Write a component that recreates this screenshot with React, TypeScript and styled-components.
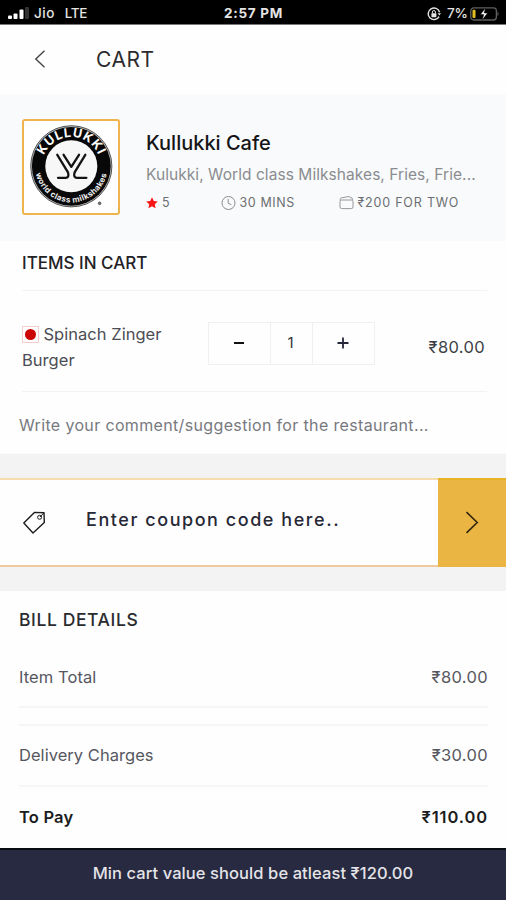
import React from 'react';
import styled, { createGlobalStyle } from 'styled-components';

const GlobalStyle = createGlobalStyle`
  * { box-sizing: border-box; }
  body { margin: 0; background: #fff; }
`;

const Screen = styled.main`
  width: 506px;
  height: 900px;
  display: flex;
  flex-direction: column;
  overflow: hidden;
  background: #fefefe;
  color: #3a3b42;
  font-family: Inter, 'Liberation Sans', sans-serif;
  white-space: nowrap;

  svg { display: block; flex: none; }
`;

const StatusBar = styled.header`
  height: 25px;
  padding: 3px 6px 0 7px;
  display: grid;
  grid-template-columns: 1fr auto 1fr;
  align-items: center;
  background: #000;
  border-bottom: 1px solid #777;
  color: #e4e4e4;
  font-size: 13.5px;
  font-weight: 500;
  line-height: 21px;
`;

const StatusGroup = styled.div<{ $end?: boolean }>`
  display: flex;
  align-items: center;
  justify-content: ${p => (p.$end ? 'flex-end' : 'flex-start')};
`;

const Carrier = styled.span`
  margin: 0 10px 0 4px;
  letter-spacing: 0.5px;
`;

const Network = styled.span`
  letter-spacing: -0.4px;
`;

const Clock = styled.span`
  font-weight: 700;
  letter-spacing: 0.7px;
`;

const Percent = styled.span`
  margin: 0 2px 0 6px;
`;

const TitleBar = styled.div`
  height: 69px;
  display: flex;
  align-items: center;
  padding: 0 0 2px 34px;
`;

const PageTitle = styled.h1`
  margin: 1px 0 0 50px;
  font-size: 21px;
  font-weight: 400;
  letter-spacing: 0.5px;
  color: #2c2c2e;
`;

const Restaurant = styled.section`
  height: 147px;
  padding: 25px 22px 0;
  display: flex;
  gap: 26px;
  background: #f8fafc;
`;

const LogoFrame = styled.div`
  width: 98px;
  height: 96px;
  border: 2px solid #f0b44e;
  border-radius: 3px;
  background: #fff;
`;

const RestaurantInfo = styled.div`
  width: 334px;
  padding-top: 10px;
`;

const RestaurantName = styled.h2`
  margin: 0 0 7px;
  font-size: 20px;
  font-weight: 500;
  line-height: 28px;
  color: #151517;
`;

const Cuisine = styled.p`
  margin: 0;
  font-size: 15.5px;
  line-height: 22px;
  letter-spacing: 0.06px;
  color: #8b8c8f;
`;

const MetaRow = styled.div`
  margin-top: 7px;
  display: flex;
  font-size: 12.5px;
  line-height: 20px;
  color: #6c6e71;
`;

const Meta = styled.div<{ $width: number; $gap: number; $spacing: number }>`
  width: ${p => p.$width}px;
  display: flex;
  align-items: center;
  gap: ${p => p.$gap}px;
  letter-spacing: ${p => p.$spacing}px;
`;

const CartItems = styled.section`
  height: 213px;
  padding: 0 18px 0 22px;
  border-bottom: 1px solid #f9f9f9;
`;

const ItemsTitle = styled.h3`
  height: 49px;
  margin: 0;
  font-size: 17px;
  font-weight: 500;
  line-height: 45px;
  color: #222226;
`;

const ItemRow = styled.div`
  height: 102px;
  margin-right: 1px;
  display: flex;
  border-top: 1px solid #f3f3f4;
  border-bottom: 1px solid #f3f3f4;
`;

const ItemName = styled.div`
  width: 186px;
  padding-top: 30px;
  font-size: 16.5px;
  line-height: 26px;
  letter-spacing: 0.03px;
  color: #4c4d54;
`;

const ItemLine = styled.div`
  display: flex;
  align-items: center;
`;

const NonVegMark = styled.span`
  width: 17px;
  height: 17px;
  margin-right: 4.5px;
  display: grid;
  place-items: center;
  border: 1px solid #f5cccc;

  &::before {
    content: '';
    width: 11px;
    height: 11px;
    border-radius: 50%;
    background: #cc0303;
  }
`;

const Stepper = styled.div`
  width: 167px;
  height: 43px;
  margin-top: 31px;
  display: grid;
  grid-template-columns: 61px 43px 1fr;
  border: 1px solid #f0f0f1;
`;

const StepperCell = styled.div<{ $middle?: boolean }>`
  display: grid;
  place-items: center;
  padding: 0 2px 2px 0;
  border: solid #f0f0f1;
  border-width: ${p => (p.$middle ? '0 1px' : '0')};
  font-size: 15px;
  color: #333;
`;

const ItemPrice = styled.div`
  flex: 1;
  padding: 43px 2px 0 0;
  text-align: right;
  font-size: 16.5px;
  line-height: 26px;
  letter-spacing: 0.35px;
  color: #3d3e45;
`;

const Comment = styled.div`
  margin-left: -3px;
  font-size: 16px;
  line-height: 66px;
  letter-spacing: 0.35px;
  color: #77797f;
`;

const Gap = styled.div`
  height: 24px;
  background: #f3f3f3;
`;

const Coupon = styled.section`
  height: 89px;
  display: flex;
`;

const CouponField = styled.div`
  width: 438px;
  padding-left: 22px;
  display: flex;
  align-items: center;
  border-top: 2px solid #f4dcae;
  border-bottom: 2px solid #edcb9c;
`;

const CouponText = styled.span`
  margin: -6px 0 0 40px;
  font-size: 18px;
  font-weight: 500;
  letter-spacing: 1.55px;
  color: #272836;
`;

const CouponSubmit = styled.div`
  flex: 1;
  display: grid;
  place-items: center;
  padding-bottom: 3px;
  border-top: 2px solid #e5b324;
  background: #eab543;
`;

const Bill = styled.section`
  height: 257px;
  padding: 0 18px 0 19px;
`;

const BillTitle = styled.h3`
  height: 57px;
  margin: 0;
  font-size: 17.5px;
  font-weight: 500;
  line-height: 58px;
  letter-spacing: 0.6px;
  color: #2a2b2e;
`;

const BillRow = styled.div<{ $height: number; $total?: boolean }>`
  height: ${p => p.$height}px;
  padding-bottom: 1px;
  display: flex;
  align-items: center;
  justify-content: space-between;
  border-bottom: ${p => (p.$total ? 'none' : '2px solid #f6f6f7')};
  font-size: 16.5px;
  font-weight: ${p => (p.$total ? 600 : 400)};
  color: ${p => (p.$total ? '#1b1c20' : '#56575e')};
`;

const BillLabel = styled.span<{ $spacing: number }>`
  letter-spacing: ${p => p.$spacing}px;
`;

const BillAmount = styled.span<{ $spacing: number }>`
  letter-spacing: ${p => p.$spacing}px;
`;

const BillSpacer = styled.div`
  height: 18px;
  border-bottom: 2px solid #f6f6f7;
`;

const Notice = styled.footer`
  height: 52px;
  border-top: 2px solid #080d12;
  background: #272a40;
  color: #e4e4e8;
  text-align: center;
  font-size: 16.5px;
  font-weight: 500;
  line-height: 47px;
  letter-spacing: 0.08px;
`;

const SignalIcon = () => (
  <svg width="23" height="14" viewBox="0 0 23 14">
    <rect x="1" y="8.5" width="4" height="3.5" rx="1" fill="#fff" />
    <rect x="6.5" y="6.5" width="4" height="5.5" rx="1" fill="#fff" />
    <rect x="12.5" y="2.5" width="4" height="9.5" rx="1" fill="#fff" />
    <rect x="18" y="0" width="4" height="12" rx="1" fill="#333" />
  </svg>
);

const RotationLockIcon = () => (
  <svg width="14" height="14" viewBox="0 0 14 14" fill="none" stroke="#e4e4e4">
    <path d="M12.1 9.6A5.8 5.8 0 1 1 12.6 5.2" strokeWidth="1.4" />
    <path d="M10.6 6.2h3.4l-1.7 2.4z" fill="#e4e4e4" stroke="none" />
    <rect x="4.4" y="6.2" width="5" height="4" rx=".6" fill="#e4e4e4" stroke="none" />
    <path d="M5.4 6.4V5a1.5 1.5 0 0 1 3 0v1.4" />
  </svg>
);

const BatteryIcon = () => (
  <svg width="30" height="14" viewBox="0 0 30 14">
    <rect x=".8" y=".8" width="25.6" height="12.2" rx="3" fill="none" stroke="#606060" strokeWidth="1.3" />
    <rect x="2.5" y="2.7" width="3" height="8.4" rx="1" fill="#dfbd25" />
    <path d="M27.5 4.5q2.4 2.4 0 4.8z" fill="#606060" />
    <path d="M15.5 1 10.4 7.5h3.3L12.2 13l5.4-7h-3.4z" fill="#fff" stroke="#000" strokeWidth=".5" />
  </svg>
);

const BackIcon = () => (
  <svg width="12" height="18" viewBox="0 0 12 18" fill="none" stroke="#444" strokeWidth="1.4">
    <path d="M10.5 .8 1.8 9l8.7 8.2" />
  </svg>
);

const StarIcon = () => (
  <svg width="12" height="12" viewBox="0 0 24 24" fill="#f81414">
    <path d="m12 .5 3.5 7.4 8.1 1-6 5.6 1.6 8.1L12 18.6l-7.2 4 1.6-8.1-6-5.6 8.1-1z" />
  </svg>
);

const ClockIcon = () => (
  <svg width="15" height="15" viewBox="0 0 15 15" fill="none" stroke="#8a8c8f" strokeWidth="1">
    <circle cx="7.5" cy="7" r="6.5" />
    <path d="M7.2 2.9v4.4l3.2 1.4" />
  </svg>
);

const WalletIcon = () => (
  <svg width="15" height="14" viewBox="0 0 15 14" fill="none" stroke="#96989b" strokeWidth="1">
    <rect x="1" y="4" width="13" height="8.6" rx="1.6" />
    <path d="M1.2 4.7V3.3q0-1.2 1.2-1.4L9.8.5q1.2 0 1.4 1.2h1q1.2 0 1.2 1.4v1.4" />
  </svg>
);

const TagIcon = () => (
  <svg width="24" height="24" viewBox="0 0 24 24" fill="none" stroke="#1c1c1c" strokeWidth="1.4" strokeLinejoin="round">
    <path d="M12.4 1.4 22 1.8l.3 9.8L11 22 1.8 12z" />
    <circle cx="17.6" cy="6.3" r="2" strokeWidth="1" />
    <path d="m17.8 6.1 4.2-4.3" strokeWidth="1" />
  </svg>
);

const ForwardIcon = () => (
  <svg width="14" height="23" viewBox="0 0 14 23" fill="none" stroke="#33280f" strokeWidth="1.6">
    <path d="M1.5 1.2 12.2 11.5 1.5 21.8" />
  </svg>
);

const MinusIcon = () => (
  <svg width="12" height="12" viewBox="0 0 12 12" stroke="#111" strokeWidth="2">
    <path d="M1 6h10" />
  </svg>
);

const PlusIcon = () => (
  <svg width="12" height="12" viewBox="0 0 12 12" stroke="#26263a" strokeWidth="1.8">
    <path d="M.5 6h11M6 .5v11" />
  </svg>
);

const CafeLogo = () => (
  <svg width="94" height="92" viewBox="1.2 .7 94 92" fontFamily="Inter, sans-serif">
    <defs>
      <path id="ringTop" d="M19.1 46A29.4 29.4 0 0 1 77.9 46" />
      <path id="ringBottom" d="M12.3 46A36.2 36.2 0 0 0 84.7 46" />
    </defs>
    <circle cx="48.5" cy="46" r="40.6" fill="#bbb" stroke="#444" strokeWidth=".9" />
    <circle cx="48.5" cy="46" r="39.4" fill="#080808" />
    <circle cx="48.5" cy="46" r="26" fill="#f7f7f7" />
    <text fill="#fff" fontSize="12.5" fontWeight="700" textAnchor="middle" letterSpacing=".9">
      <textPath href="#ringTop" startOffset="50%">KULLUKKI</textPath>
    </text>
    <text fill="#eee" fontSize="8" fontWeight="700" textAnchor="middle" letterSpacing=".35">
      <textPath href="#ringBottom" startOffset="50%">world class milkshakes</textPath>
    </text>
    <g fill="none" stroke="#141414" strokeWidth="2.3" strokeLinecap="round" strokeLinejoin="round">
      <path d="M34.5 34.5 45.2 52q1.4 5.5-2.4 5.5h-7.6" />
      <path d="M40.8 34.5 48.5 46.5 56.2 34.5" />
      <path d="M62.5 34.5 51.8 52q-1.4 5.5 2.4 5.5h9.4" />
    </g>
    <circle cx="76.8" cy="83" r="1.3" fill="#777" stroke="#555" strokeWidth="1" />
  </svg>
);

export default function App() {
  return (
    <Screen>
      <GlobalStyle />
      <StatusBar>
        <StatusGroup>
          <SignalIcon />
          <Carrier>Jio</Carrier>
          <Network>LTE</Network>
        </StatusGroup>
        <Clock>2:57 PM</Clock>
        <StatusGroup $end>
          <RotationLockIcon />
          <Percent>7%</Percent>
          <BatteryIcon />
        </StatusGroup>
      </StatusBar>

      <TitleBar>
        <BackIcon />
        <PageTitle>CART</PageTitle>
      </TitleBar>

      <Restaurant>
        <LogoFrame>
          <CafeLogo />
        </LogoFrame>
        <RestaurantInfo>
          <RestaurantName>Kullukki Cafe</RestaurantName>
          <Cuisine>Kulukki, World class Milkshakes, Fries, Frie...</Cuisine>
          <MetaRow>
            <Meta $width={75} $gap={4} $spacing={0}>
              <StarIcon />5
            </Meta>
            <Meta $width={118} $gap={3.5} $spacing={0.6}>
              <ClockIcon />30 MINS
            </Meta>
            <Meta $width={130} $gap={3.5} $spacing={0.8}>
              <WalletIcon />₹200 FOR TWO
            </Meta>
          </MetaRow>
        </RestaurantInfo>
      </Restaurant>

      <CartItems>
        <ItemsTitle>ITEMS IN CART</ItemsTitle>
        <ItemRow>
          <ItemName>
            <ItemLine>
              <NonVegMark />
              Spinach Zinger
            </ItemLine>
            <ItemLine>Burger</ItemLine>
          </ItemName>
          <Stepper>
            <StepperCell>
              <MinusIcon />
            </StepperCell>
            <StepperCell $middle>1</StepperCell>
            <StepperCell>
              <PlusIcon />
            </StepperCell>
          </Stepper>
          <ItemPrice>₹80.00</ItemPrice>
        </ItemRow>
        <Comment>Write your comment/suggestion for the restaurant...</Comment>
      </CartItems>

      <Gap />
      <Coupon>
        <CouponField>
          <TagIcon />
          <CouponText>Enter coupon code here..</CouponText>
        </CouponField>
        <CouponSubmit>
          <ForwardIcon />
        </CouponSubmit>
      </Coupon>
      <Gap />

      <Bill>
        <BillTitle>BILL DETAILS</BillTitle>
        <BillRow $height={60}>
          <BillLabel $spacing={0.08}>Item Total</BillLabel>
          <BillAmount $spacing={0.35}>₹80.00</BillAmount>
        </BillRow>
        <BillSpacer />
        <BillRow $height={61}>
          <BillLabel $spacing={0.04}>Delivery Charges</BillLabel>
          <BillAmount $spacing={0.35}>₹30.00</BillAmount>
        </BillRow>
        <BillRow $height={60} $total>
          <BillLabel $spacing={0.2}>To Pay</BillLabel>
          <BillAmount $spacing={0.9}>₹110.00</BillAmount>
        </BillRow>
      </Bill>

      <Notice>Min cart value should be atleast ₹120.00</Notice>
    </Screen>
  );
}
